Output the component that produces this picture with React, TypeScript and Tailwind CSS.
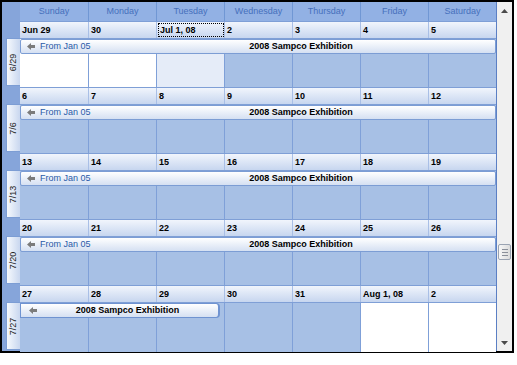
import { FC } from "react";

type CellTone = "blue" | "white" | "today";

interface Week {
  label: string;
  dates: string[];
  tones: CellTone[];
  barSpan: number;
  continued: boolean;
}

const days = ["Sunday", "Monday", "Tuesday", "Wednesday", "Thursday", "Friday", "Saturday"];

const weeks: Week[] = [
  {
    label: "6/29",
    dates: ["Jun 29", "30", "Jul 1, 08", "2", "3", "4", "5"],
    tones: ["white", "white", "today", "blue", "blue", "blue", "blue"],
    barSpan: 7,
    continued: true,
  },
  {
    label: "7/6",
    dates: ["6", "7", "8", "9", "10", "11", "12"],
    tones: ["blue", "blue", "blue", "blue", "blue", "blue", "blue"],
    barSpan: 7,
    continued: true,
  },
  {
    label: "7/13",
    dates: ["13", "14", "15", "16", "17", "18", "19"],
    tones: ["blue", "blue", "blue", "blue", "blue", "blue", "blue"],
    barSpan: 7,
    continued: true,
  },
  {
    label: "7/20",
    dates: ["20", "21", "22", "23", "24", "25", "26"],
    tones: ["blue", "blue", "blue", "blue", "blue", "blue", "blue"],
    barSpan: 7,
    continued: true,
  },
  {
    label: "7/27",
    dates: ["27", "28", "29", "30", "31", "Aug 1, 08", "2"],
    tones: ["blue", "blue", "blue", "blue", "blue", "white", "white"],
    barSpan: 3,
    continued: false,
  },
];

const toneClass: Record<CellTone, string> = {
  blue: "bg-[#a7c0e5]",
  white: "bg-white",
  today: "bg-[#e5ecf8]",
};

const colStart = [
  "col-start-1",
  "col-start-2",
  "col-start-3",
  "col-start-4",
  "col-start-5",
  "col-start-6",
  "col-start-7",
];

const LeftArrow: FC = () => (
  <svg width="8" height="7" viewBox="0 0 8 7" className="shrink-0">
    <polygon points="0,3.5 4,0 4,2 8,2 8,5 4,5 4,7" fill="#7b7b7b" />
  </svg>
);

const EventBar: FC<{ week: Week }> = ({ week }) => {
  if (week.barSpan < 7) {
    return (
      <div className="col-start-1 col-end-4 row-start-1 z-10 mr-[4px] flex h-[15px] items-center rounded-r-[4px] border border-r-2 border-[#6f93d1] bg-gradient-to-b from-white to-[#d5e0f2]">
        <div className="flex w-[16px] justify-end">
          <LeftArrow />
        </div>
        <div className="flex-1 text-center font-bold text-black">2008 Sampco Exhibition</div>
      </div>
    );
  }
  return (
    <div className="col-start-1 col-end-8 row-start-1 z-10 flex h-[15px] items-center rounded-[2px] border border-[#7c9dd4] bg-gradient-to-b from-white to-[#d5e0f2]">
      <div className="flex w-[86px] items-center gap-[5px] pl-[6px]">
        <LeftArrow />
        <span className="text-[#2a5aa8]">From Jan 05</span>
      </div>
      <div className="flex-1 text-center font-bold text-black">2008 Sampco Exhibition</div>
    </div>
  );
};

const WeekRow: FC<{ week: Week }> = ({ week }) => (
  <div className="flex h-[66px]">
    <div className="flex w-[18px] flex-col">
      <div className="h-[17px]" />
      <div className="ml-[4px] flex h-[48px] w-[14px] items-center justify-center border border-r-0 border-[#7c9dd4] bg-gradient-to-r from-[#f6f9fd] to-[#c9d7ef]">
        <span className="-rotate-90 whitespace-nowrap text-[#222]">{week.label}</span>
      </div>
    </div>
    <div className="flex w-[476px] flex-col">
      <div className="grid h-[17px] grid-cols-7 border-t border-[#7f9fd6] bg-gradient-to-b from-[#f1f5fc] to-[#c7d6ef]">
        {week.dates.map((d, i) => (
          <div
            key={i}
            className={`flex items-center pl-[2px] font-bold text-black ${i > 0 ? "border-l border-[#a9bfe6]" : ""}`}
          >
            {d === "Jul 1, 08" ? (
              <span className="flex h-[14px] w-[66px] items-center border border-dotted border-black pl-[1px] -ml-[1px]">
                {d}
              </span>
            ) : (
              d
            )}
          </div>
        ))}
      </div>
      <div className="grid h-[49px] grid-cols-7 grid-rows-[15px_34px] border-t border-[#7f9fd6]">
        {week.tones.map((t, i) => (
          <div
            key={i}
            className={`${colStart[i]} row-start-1 row-end-3 ${toneClass[t]} ${i > 0 ? "border-l border-[#7fa0d8]" : ""}`}
          />
        ))}
        <EventBar week={week} />
      </div>
    </div>
  </div>
);

const ScrollBar: FC = () => (
  <div className="flex w-[16px] flex-col border-l border-[#5b7fc4] bg-[#f0f0f0]">
    <div className="flex h-[17px] items-center justify-center">
      <svg width="7" height="4" viewBox="0 0 7 4">
        <polygon points="3.5,0 7,4 0,4" fill="#4a4a4a" />
      </svg>
    </div>
    <div className="flex flex-1 flex-col items-center">
      <div className="mt-[225px] flex h-[16px] w-[13px] flex-col items-center justify-center gap-[2px] rounded-[2px] border border-[#9aa3b2] bg-gradient-to-r from-[#f7f7f7] to-[#dcdcdc]">
        <div className="h-px w-[6px] bg-[#8a8f99]" />
        <div className="h-px w-[6px] bg-[#8a8f99]" />
        <div className="h-px w-[6px] bg-[#8a8f99]" />
      </div>
    </div>
    <div className="flex h-[17px] items-center justify-center">
      <svg width="7" height="4" viewBox="0 0 7 4">
        <polygon points="0,0 7,0 3.5,4" fill="#4a4a4a" />
      </svg>
    </div>
  </div>
);

const App: FC = () => {
  return (
    <div
      className="h-[365px] w-[517px] bg-white text-[9px] leading-none"
      style={{ fontFamily: '"Liberation Sans", Arial, sans-serif' }}
    >
      <div className="flex h-[353px] w-[514px] border-2 border-black bg-[#86a5da]">
        <div className="flex w-[494px] flex-col">
          <div className="flex h-[19px]">
            <div className="w-[18px]" />
            <div className="grid w-[476px] grid-cols-7 bg-[#92b1e4]">
              {days.map((d, i) => (
                <div
                  key={d}
                  className={`flex items-center justify-center text-[#4670bc] ${i > 0 ? "border-l border-[#7097d4]" : ""}`}
                >
                  {d}
                </div>
              ))}
            </div>
          </div>
          {weeks.map((w) => (
            <WeekRow key={w.label} week={w} />
          ))}
        </div>
        <ScrollBar />
      </div>
    </div>
  );
};

export default App;
